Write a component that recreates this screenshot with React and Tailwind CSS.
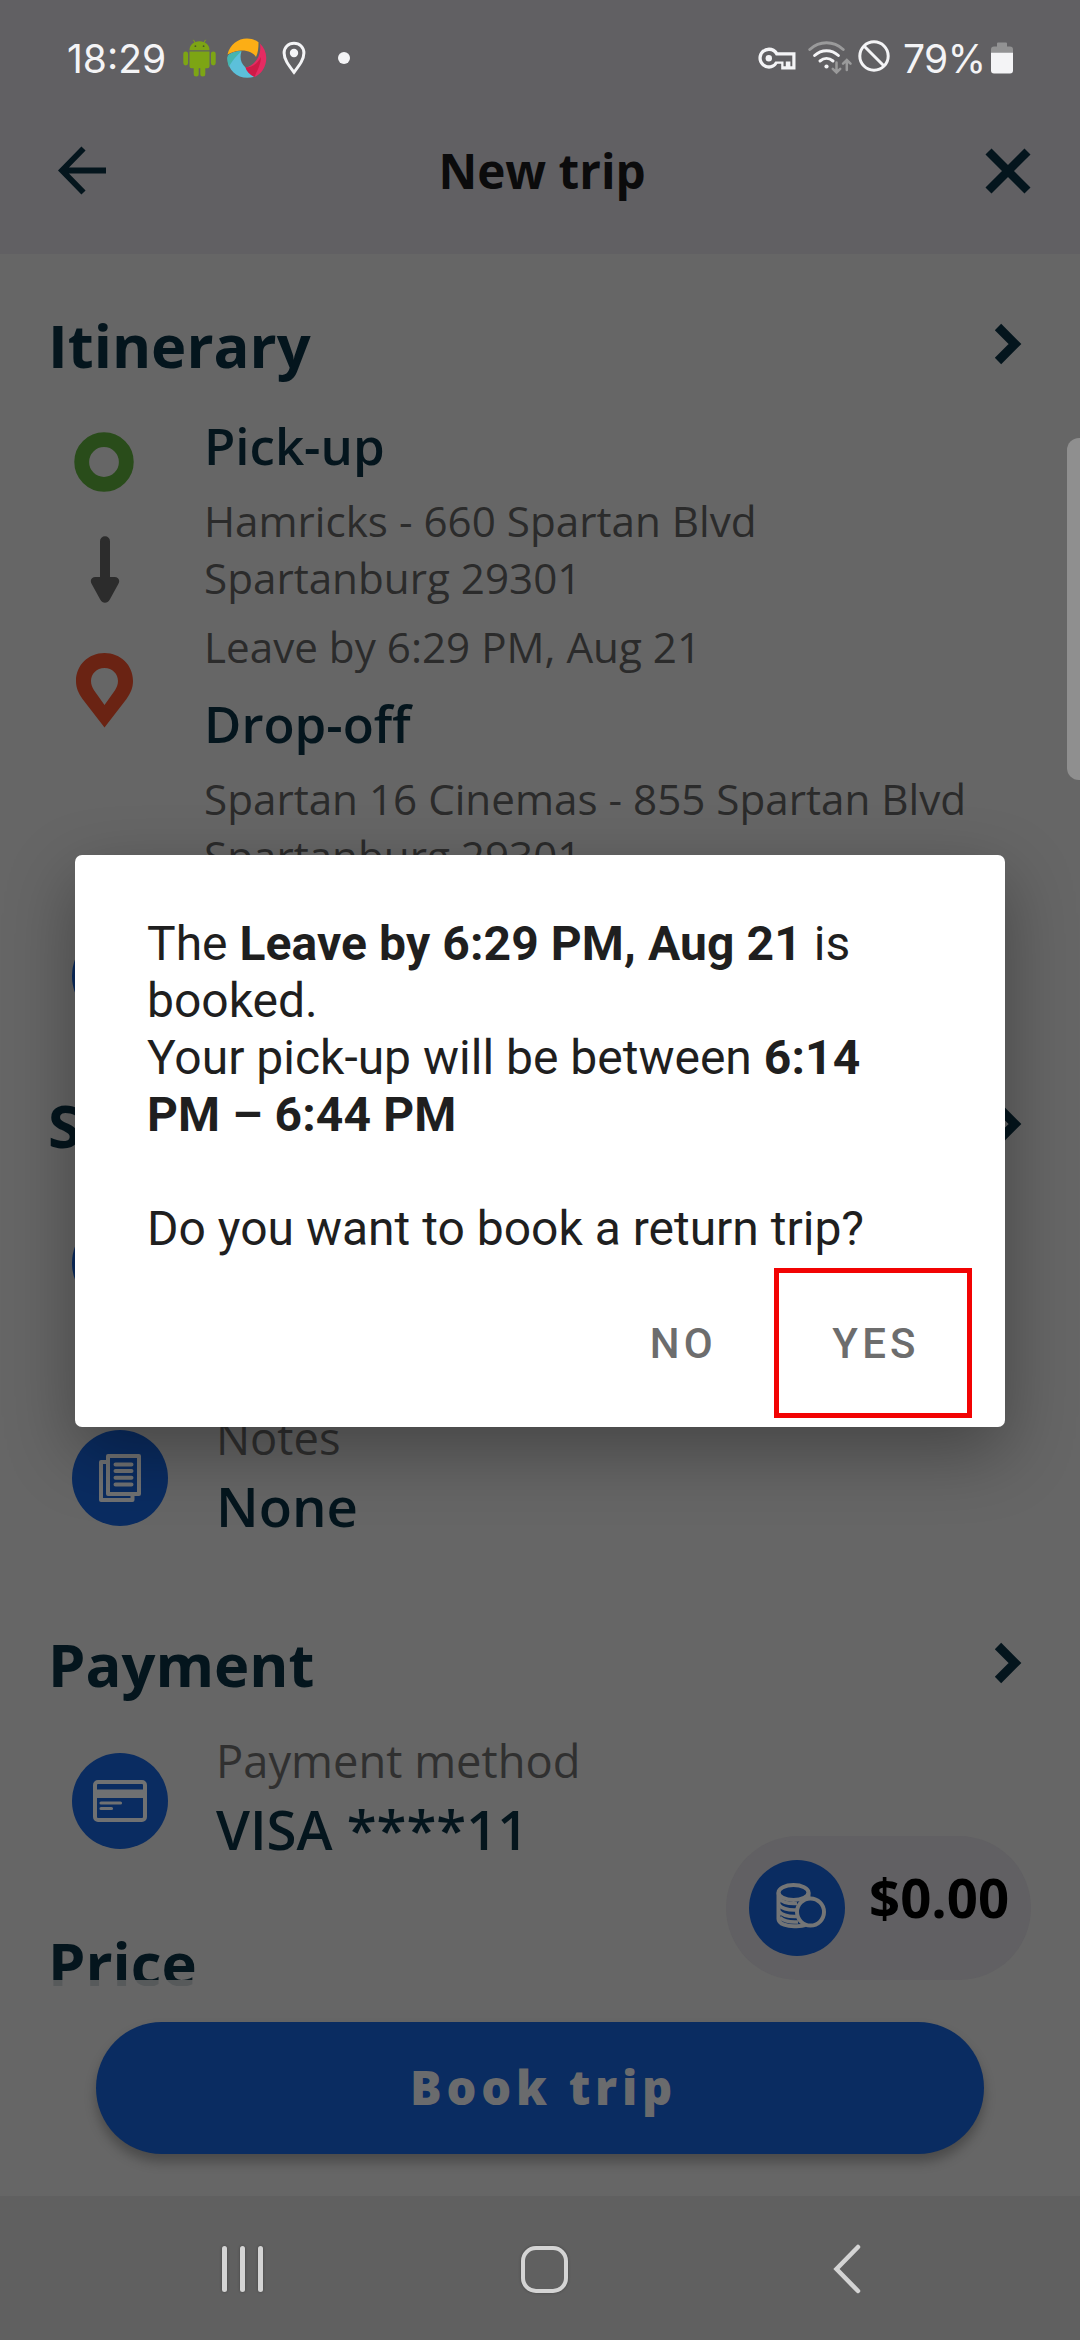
import React from "react";

function AndroidIcon() {
  return (
    <svg className="h-[38px] w-[33px] fill-[#7da514]" viewBox="0 0 33 38">
      <path d="M6.5 11.2C6.5 5.8 10.8 2.2 16.5 2.2s10 3.6 10 9z" />
      <path d="M10.4 0.8l2 3.4M22.6 0.8l-2 3.4" stroke="#7da514" strokeWidth="1" />
      <circle cx="12.4" cy="7.2" r="0.9" fill="#4c5a25" />
      <circle cx="20.6" cy="7.2" r="0.9" fill="#4c5a25" />
      <path d="M6.5 12.6h20v14.6a2 2 0 0 1-2 2h-2.200v5.800a2.500 2.500 0 0 1-5 0v-5.800h-1.600v5.800a2.500 2.500 0 0 1-5 0v-5.800H8.500a2 2 0 0 1-2-2z" />
      <rect x="0.300" y="12.400" width="4.800" height="14" rx="2.400" />
      <rect x="27.900" y="12.400" width="4.800" height="14" rx="2.400" />
    </svg>
  );
}

function SwirlIcon() {
  return (
    <svg className="h-10 w-10" viewBox="0 0 40 40">
      <path d="M0.500 16.500C3 6.500 11 0.600 20 0.600c4.500 0 8.500 1.300 11.500 3.600 0 6-.5 10.500-2.500 14.800C25 12.500 13 9.500 0.500 16.500z" fill="#fcae15" />
      <path d="M33 5.500c5 5 7 11 6 18-1.300 7.500-5.500 13-11.500 15.500-5-2.500-8-5.500-9-9.500C27 28 35 18.500 33 5.500z" fill="#e62b62" />
      <path d="M18.500 29.500c1.500 4 4.500 7 8.800 9.200C14 43 1 34.500 0.500 20.500 0.500 18.500 1.500 17 3 16c4-2 8-3 11.500-2.700C12.500 19 13.500 25 18.500 29.500z" fill="#5cc0da" />
      <path d="M14.500 13.300C10.500 17 4 24 2 29 0.500 25 0 21.500 0.700 17.800 4.500 14.500 10 13 14.500 13.300z" fill="#45b5ae" />
      <path d="M18.500 29.500c7 0 12.500-4.500 15.500-10.500C34 26 30 33 27.500 39c-5-2.500-8-5.500-9-9.500z" fill="#cf1b47" />
    </svg>
  );
}

function PinIcon() {
  return (
    <svg className="h-[34px] w-6" viewBox="0 0 24 34">
      <path d="M12 2.200c5.700 0 9.900 4.300 9.900 9.800 0 6.500-4.500 12.200-9.900 19.300C6.600 24.200 2.100 18.500 2.100 12c0-5.500 4.200-9.800 9.900-9.800z" fill="none" stroke="#f4f4f6" strokeWidth="3" />
      <circle cx="12" cy="12" r="4.200" fill="#f4f4f6" />
    </svg>
  );
}

function KeyIcon() {
  return (
    <svg className="h-[23px] w-[38px]" viewBox="0 0 38 23">
      <path
        fillRule="evenodd"
        fill="#f4f4f6"
        d="M11 0.500c3.900 0 7 2.100 8.800 4.700H37.500v17.300H23.200v-5.700h-3.800c-1.600 3-4.700 4.900-8.400 4.900A10.600 10.600 0 0 1 11 0.500zM11 3.900a7.200 7.200 0 1 0 6.300 10.500H25.500v4.800h2.300v-4.800h4.600v4.800h1.900V8.600H17.800A7.300 7.300 0 0 0 11 3.900z"
      />
      <circle cx="10.800" cy="11.200" r="3.200" fill="#f4f4f6" />
    </svg>
  );
}

function WifiIcon() {
  return (
    <svg className="h-[34px] w-11" viewBox="0 0 44 34" fill="none" strokeLinecap="round">
      <path d="M1.800 8.500C11.500-0.500 25.500-0.500 35.200 8.500" stroke="#9a9a9b" strokeWidth="3" />
      <path d="M6.600 14.500c7-6.400 16.800-6.400 23.800 0" stroke="#f4f4f6" strokeWidth="3" />
      <path d="M12 20c4-3.400 9-3.400 13 0" stroke="#f4f4f6" strokeWidth="3" />
      <circle cx="18.500" cy="25.500" r="2.100" fill="#f4f4f6" />
      <path d="M28.500 21.500V31M24.800 27.800l3.700 3.700 3.700-3.700M38.800 29V19.500M35.100 22.700l3.700-3.700 3.700 3.700" stroke="#9a9a9b" strokeWidth="2.500" />
    </svg>
  );
}

function BlockedIcon() {
  return (
    <svg className="size-8" viewBox="0 0 32 32" fill="none" stroke="#f4f4f6" strokeWidth="3">
      <circle cx="16" cy="16" r="14.200" />
      <path d="M6 6l20 20" />
    </svg>
  );
}

function BatteryIcon() {
  return (
    <svg className="h-8 w-[22px]" viewBox="0 0 22 32">
      <path d="M6 1.500Q6 0.500 7 0.500h8q1 0 1 1V4.500h3q3 0 3 3v4H0v-4q0-3 3-3h3z" fill="#929293" />
      <path d="M0 10.800h22V28.500q0 3-3 3H3q-3 0-3-3z" fill="#f4f4f6" />
    </svg>
  );
}

function StatusBar() {
  return (
    <div className="flex h-[116px] items-center pr-[67px] pl-[67px]">
      <span className="mt-px w-[116px] font-[Inter] text-[39px] leading-none text-[#f4f4f6]">18:29</span>
      <AndroidIcon />
      <span className="ml-[11px]"><SwirlIcon /></span>
      <span className="ml-[15px]"><PinIcon /></span>
      <span className="ml-8 size-3 rounded-full bg-[#f4f4f6]" />
      <div className="ml-auto flex items-center">
        <KeyIcon />
        <span className="ml-3"><WifiIcon /></span>
        <span className="mb-1 ml-[6px]"><BlockedIcon /></span>
        <span className="mt-px mr-[6px] ml-[13px] w-[82px] font-[Inter] text-[39px] leading-none tracking-[-0.600px] whitespace-nowrap text-[#f4f4f6]">79%</span>
        <BatteryIcon />
      </div>
    </div>
  );
}

function TitleBar() {
  return (
    <div className="flex h-[138px] items-start justify-between pt-[30px] pr-[48px] pl-[58px]">
      <svg className="size-[49px]" viewBox="0 0 49 49" fill="none" stroke="#04151d" strokeWidth="5.800">
        <path d="M48 24.500H5M25.500 2.500L4 24.500l21.500 22" />
      </svg>
      <h1 className="-mt-[5px] mr-[7px] text-[47.700px] leading-[60px] font-bold text-[#0b0b0c]">New trip</h1>
      <svg className="mt-[1px] size-[48px]" viewBox="0 0 48 48" fill="none" stroke="#04151d" strokeWidth="8.500">
        <path d="M4.500 4.500l39 39M43.500 4.500l-39 39" />
      </svg>
    </div>
  );
}

function SectionHeading({ title, chevron = true }) {
  return (
    <div className="flex h-20 shrink-0 items-center justify-between pr-[58px] pl-12">
      <h2 className="text-[59.700px] leading-[80px] font-bold text-[#04151d]">{title}</h2>
      {chevron && (
        <svg className="mb-[2px] h-[42px] w-7" viewBox="0 0 28 42" fill="none" stroke="#04151d" strokeWidth="9">
          <path d="M4 4l17 17L4 38" />
        </svg>
      )}
    </div>
  );
}

function IconCircle({ children }) {
  return <div className="flex size-24 shrink-0 items-center justify-center rounded-full bg-[#0a2c61]">{children}</div>;
}

function InfoRow({ icon, label, value }) {
  return (
    <div className="flex h-[135px] shrink-0 gap-12 pl-[72px]">
      <div className="pt-[22px]">
        <IconCircle>{icon}</IconCircle>
      </div>
      <div>
        <p className="h-[61px] text-[45.300px] leading-[60px] text-[#303030]">{label}</p>
        <p className="text-[54.500px] leading-[75px] font-semibold text-[#04151d]">{value}</p>
      </div>
    </div>
  );
}

function NotesIcon() {
  return (
    <svg className="h-12 w-[43px]" viewBox="0 0 43 48" fill="none" stroke="#707172" strokeWidth="4" strokeLinejoin="round">
      <path d="M9 2h31v38H9z" />
      <path d="M9 8H2v38h31.500v-5" />
      <path d="M16.500 10.500h16M16.500 17h16M16.500 23.800h16M16.500 30.500h16" strokeLinecap="round" />
    </svg>
  );
}

function CardIcon() {
  return (
    <svg className="h-[42px] w-[54px]" viewBox="0 0 54 42" fill="none" stroke="#707172">
      <rect x="2" y="2" width="50" height="38" rx="3" strokeWidth="4" />
      <path d="M2 13.800h50" strokeWidth="8.500" />
      <path d="M8 23h19.500M8 28.500h10.500" strokeWidth="3.200" strokeLinecap="round" />
    </svg>
  );
}

function CoinsIcon() {
  return (
    <svg className="mb-1 ml-2 h-[46px] w-[50px]" viewBox="0 0 50 46" fill="none" stroke="#747576" strokeWidth="4">
      <ellipse cx="17.500" cy="9.500" rx="15" ry="7.500" />
      <path d="M2.500 9.500V36c0 5 9 7.800 18 7.300 5 0 7-.5 9-1.500M32.500 9.500v5" />
      <path d="M3 15.500c4 4.500 11 5.500 18 5M3 22c4 4.500 10 5.200 17 5M3 28.500c4 4.500 10 5.200 17 5M4 34.500c4 4 10 5 18 4.500" strokeWidth="3.500" />
      <circle cx="34.500" cy="29" r="13.500" fill="#0a2c61" />
    </svg>
  );
}

function ClockIcon() {
  return (
    <svg className="size-12" viewBox="0 0 48 48" fill="none" stroke="#707172" strokeWidth="4">
      <circle cx="24" cy="24" r="21" />
      <path d="M24 11v14l9 6" />
    </svg>
  );
}

function Itinerary() {
  return (
    <div className="mt-[26px] flex h-[473px] shrink-0">
      <div className="flex w-[204px] flex-col pl-[74px]">
        <svg className="mt-[21px] size-[60px]" viewBox="0 0 60 60" fill="none">
          <circle cx="30" cy="30" r="22.300" stroke="#294c1a" strokeWidth="14.800" />
        </svg>
        <svg className="mt-11 ml-4 h-[67px] w-[30px] fill-[#2c2c2c]" viewBox="0 0 30 67">
          <path d="M10 5.200a5 5 0 0 1 10 0V41h4.500c4 0 6 3.500 3.800 7l-8.500 15.500c-2.500 4.300-7.100 4.300-9.600 0L1.700 48C-.5 44.500 1.500 41 5.500 41H10z" />
        </svg>
        <svg className="mt-[50px] ml-[2px] h-[75px] w-[57px] fill-[#6a2313]" viewBox="0 0 57 75">
          <path fillRule="evenodd" d="M28.500 0C44.500 0 57 12 57 28c0 7-2.500 12-6.500 18L28.500 74.500 6.500 46C2.500 40 0 35 0 28 0 12 12.500 0 28.500 0zM28.500 15C20.500 15 15 21 15 28c0 3.500 1.200 6.300 3 9.300L28.500 52 39 37.300c1.800-3 3-5.800 3-9.300 0-7-5.500-13-13.500-13z" />
        </svg>
      </div>
      <div className="text-[42.200px] leading-[57px] text-[#2b2b2b]">
        <h3 className="text-[51px] leading-[68px] font-semibold text-[#04151d]">Pick-up</h3>
        <p className="mt-[13px]">Hamricks - 660 Spartan Blvd<br />Spartanburg 29301</p>
        <p className="mt-3">Leave by 6:29 PM, Aug 21</p>
        <h3 className="mt-[14px] text-[51px] leading-[68px] font-semibold text-[#04151d]">Drop-off</h3>
        <p className="mt-[13px]">Spartan 16 Cinemas - 855 Spartan Blvd<br />Spartanburg 29301</p>
      </div>
    </div>
  );
}

function Dialog() {
  return (
    <div className="absolute top-[855px] left-[75px] flex h-[572px] w-[930px] flex-col rounded-[7px] bg-white pt-[60px] pl-[72px] font-[Roboto] shadow-[0_24px_70px_rgba(0,0,0,0.330)]">
      <p className="text-5xl leading-[57px] text-[#1f1f1f]">
        The <b className="font-bold tracking-[0.100px]">Leave by 6:29 PM, Aug 21</b> is
        <br />
        booked.
        <br />
        Your pick-up will be between <b className="font-bold tracking-[0.100px]">6:14
        <br />
        PM – 6:44 PM</b>
        <br />
        <br />
        Do you want to book a return trip?
      </p>
      <div className="mt-[11px] mr-[33px] flex items-center justify-end gap-[57px] text-[42px] font-medium tracking-[4.200px] text-[#6d6d6d]">
        <button>NO</button>
        <button className="h-[150px] w-[198px] border-5 border-[#f20303] pl-[6px]">YES</button>
      </div>
    </div>
  );
}

function NavBar() {
  return (
    <nav className="flex h-36 items-center justify-around bg-[#606060] pt-[2px] pr-[113px] pl-[122px]">
      <div className="flex w-[240px] justify-center gap-[13px]">
        <span className="h-[46px] w-[5px] rounded-full bg-[#d4d4d4] shadow-[0_0_3px_rgba(0,0,0,0.300)]" />
        <span className="h-[46px] w-[5px] rounded-full bg-[#d4d4d4] shadow-[0_0_3px_rgba(0,0,0,0.300)]" />
        <span className="h-[46px] w-[5px] rounded-full bg-[#d4d4d4] shadow-[0_0_3px_rgba(0,0,0,0.300)]" />
      </div>
      <div className="flex flex-1 justify-center">
        <span className="h-[47px] w-[47px] rounded-[15px] border-[4.500px] border-[#d4d4d4] shadow-[0_0_3px_rgba(0,0,0,0.300)]" />
      </div>
      <div className="flex w-[240px] justify-center">
        <svg className="h-[50px] w-[28px]" viewBox="0 0 28 50" fill="none" stroke="#d4d4d4" strokeWidth="4.500" strokeLinecap="round">
          <path d="M25 3L3.500 25 25 47" />
        </svg>
      </div>
    </nav>
  );
}

export default function App() {
  return (
    <div className="relative flex h-[2340px] w-[1080px] flex-col overflow-hidden bg-[#666666] font-['Open_Sans']">
      <header className="h-[254px] shrink-0 bg-[#616063]">
        <StatusBar />
        <TitleBar />
      </header>

      <main className="relative flex h-[1732px] shrink-0 flex-col overflow-hidden pt-[51px]">
        <SectionHeading title="Itinerary" />
        <Itinerary />
        <div className="mt-[22px]"><InfoRow icon={<ClockIcon />} /></div>
        <div className="mt-11"><SectionHeading title="S" /></div>
        <div className="mt-7"><InfoRow icon={<ClockIcon />} /></div>
        <div className="mt-20"><InfoRow icon={<NotesIcon />} label="Notes" value="None" /></div>
        <div className="mt-[81px]"><SectionHeading title="Payment" /></div>
        <div className="mt-[27px]"><InfoRow icon={<CardIcon />} label="Payment method" value="VISA ****11" /></div>
        <div className="mt-[57px]"><SectionHeading title="Price" chevron={false} /></div>
        <div className="absolute inset-x-0 bottom-0 h-[6px] bg-[#666666]/85" />
        <div className="absolute right-[49px] bottom-[6px] flex h-36 w-[305px] items-center rounded-full bg-[#616063] pl-[23px]">
          <IconCircle><CoinsIcon /></IconCircle>
          <span className="mb-[23px] ml-6 text-[54.500px] leading-[74px] font-bold text-black">$0.00</span>
        </div>
      </main>

      <footer className="flex h-[210px] shrink-0 justify-center pt-9">
        <button className="h-[132px] w-[888px] rounded-full bg-[#0a2c61] pb-[2px] pl-[7px] text-[47px] font-extrabold tracking-[4.800px] text-[#6a6b6d] shadow-[0_8px_12px_rgba(0,0,0,0.280)]">
          Book trip
        </button>
      </footer>
      <NavBar />

      <Dialog />
      <div className="absolute top-[438px] right-0 h-[342px] w-[13px] rounded-l-xl bg-[#8f8f8f]" />
    </div>
  );
}
